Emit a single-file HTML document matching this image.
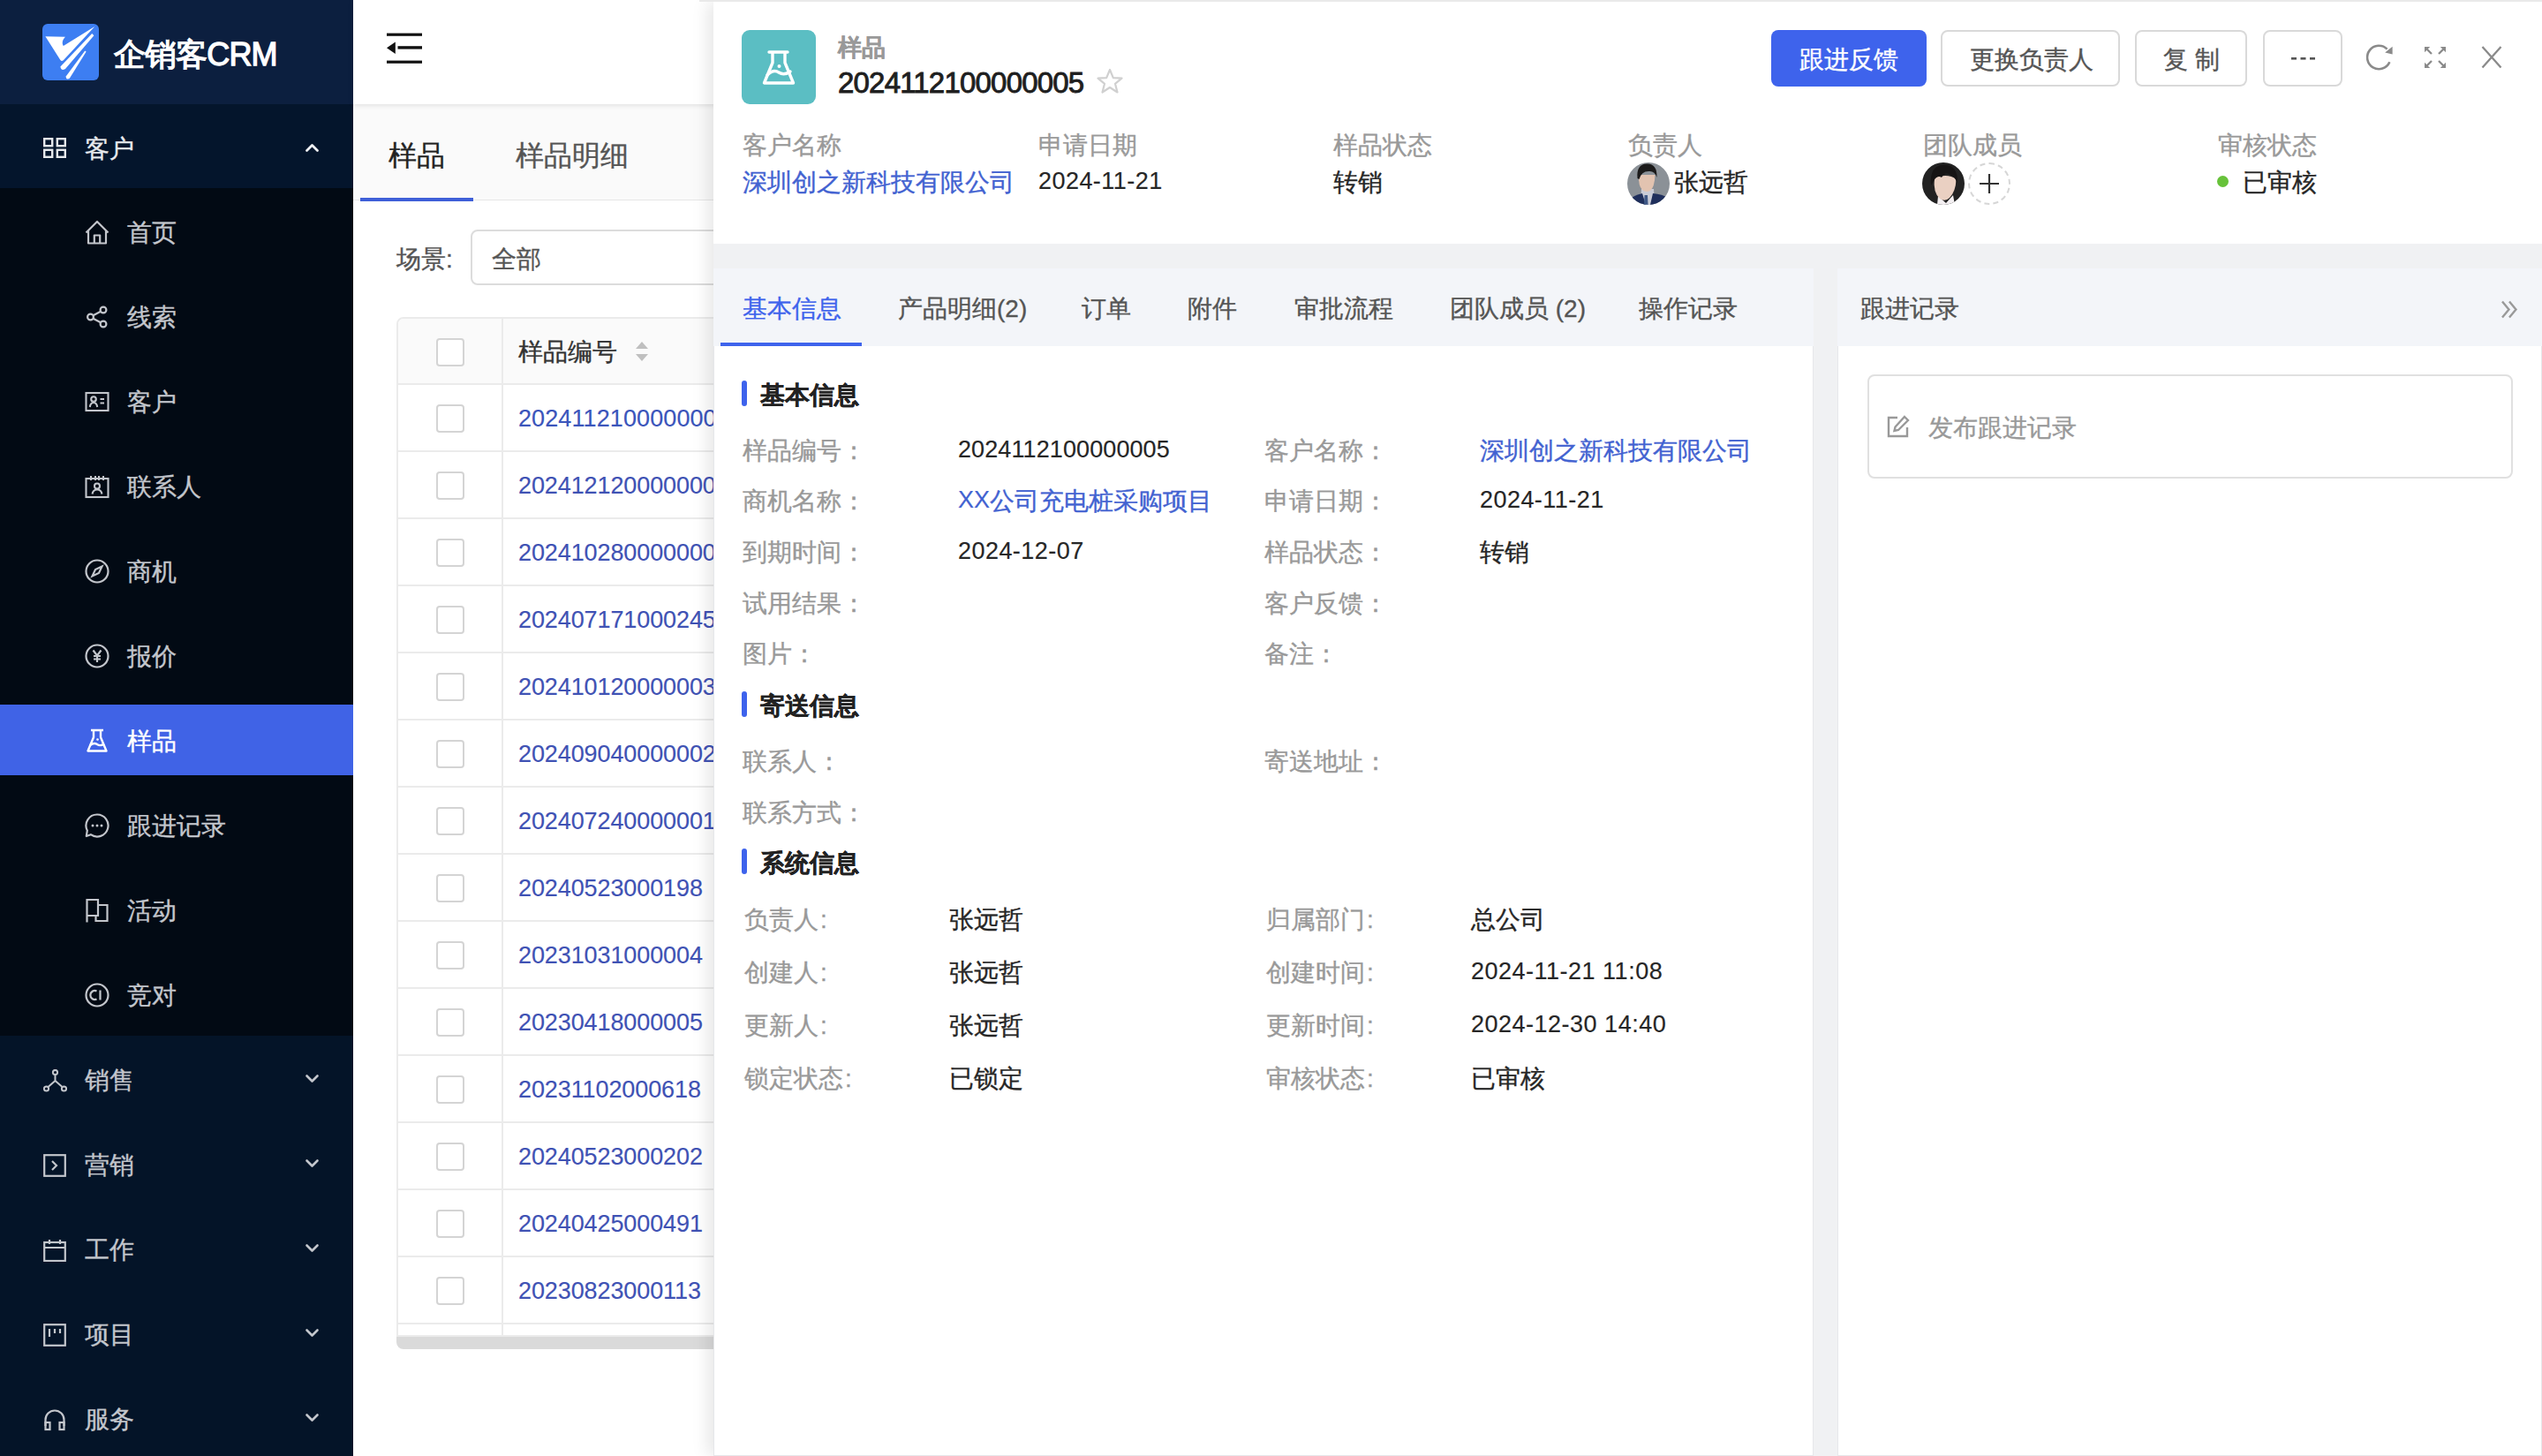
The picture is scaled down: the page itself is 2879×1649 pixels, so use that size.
<!DOCTYPE html>
<html><head><meta charset="utf-8">
<style>
*{box-sizing:border-box;margin:0;padding:0}
html,body{width:2879px;height:1649px;overflow:hidden;background:#fff}
body{font-family:"Liberation Sans",sans-serif;font-size:28px;line-height:32px;color:#333;position:relative;-webkit-text-stroke:0.35px}
.a{position:absolute;white-space:nowrap}
.n{font-size:27px;letter-spacing:-0.1px;position:relative;top:-2px;-webkit-text-stroke:0.15px}
svg{display:block}
/* sidebar */
#side{left:0;top:0;width:400px;height:1649px;background:#041428;overflow:hidden}
#logo{left:0;top:0;width:400px;height:118px;background:#0c1f3f}
#grp1{left:0;top:118px;width:400px;height:95px;background:#04152c}
#sub{left:0;top:213px;width:400px;height:960px;background:#020a14}
.mi{color:#c3c6cc}
.mt{left:144px}
.ic{left:98px}
#hl{left:0;top:798px;width:400px;height:80px;background:#4063e6}
/* main */
#hdr{left:400px;top:0;width:2479px;height:118px;background:#fff;box-shadow:0 1px 6px rgba(0,0,0,.12);z-index:2}
#tabs{left:400px;top:118px;width:2479px;height:109px;background:#fafafa;border-bottom:1px solid #e6e6e6}
/* drawer */
#drw{left:808px;top:2px;width:2071px;height:1647px;background:#f0f1f3;box-shadow:-6px 0 18px rgba(0,0,0,.10);z-index:5}
.lbl{color:#999}
.lnk{color:#4262d1}
.val{color:#262626}
.btn{border:2px solid #d9d9d9;border-radius:8px;background:#fff;height:63px;top:34px;color:#555}
</style></head><body>

<!-- ================= SIDEBAR ================= -->
<div id="side" class="a">
  <div id="logo" class="a"></div>
  <div class="a" style="left:48px;top:27px;width:64px;height:64px;border-radius:6px;background:#3d7ef2;overflow:hidden">
    <svg width="64" height="64" viewBox="0 0 64 64">
      <path d="M3.4 14.3 L26 14.8 C22.8 17.8 21.8 21.8 23.8 25 L59.3 2.9 L23.8 41.2 Q21.8 43 20.2 40.8 Z" fill="#fff"/>
      <path d="M56.2 11 L58.4 13.2 L26 51 Q21.2 54 20.4 48.6 Z" fill="#fff"/>
      <path d="M48.2 30.6 L49.6 31.6 L30.8 61.8 Q26.6 63.8 26.7 59.4 Z" fill="#fff"/>
    </svg>
  </div>
  <div class="a" style="left:129px;top:42px;font-size:36px;line-height:40px;color:#fff;-webkit-text-stroke:1.3px #fff;letter-spacing:-0.9px">企销客CRM</div>

  <div id="grp1" class="a"></div>
  <svg class="a" style="left:49px;top:156px" width="26" height="23" viewBox="0 0 26 23"><g fill="none" stroke="#e6e8ec" stroke-width="2.4"><rect x="1.2" y="1.2" width="9" height="8"/><rect x="15.8" y="1.2" width="9" height="8"/><rect x="1.2" y="13.8" width="9" height="8"/><rect x="15.8" y="13.8" width="9" height="8"/></g></svg>
  <div class="a" style="left:96px;top:153px;color:#e8eaee">客户</div>
  <svg class="a" style="left:345px;top:160px" width="17" height="13" viewBox="0 0 17 13"><path d="M2.5 10.5 L8.5 4.5 L14.5 10.5" fill="none" stroke="#f0f2f5" stroke-width="2.8" stroke-linecap="round" stroke-linejoin="round"/></svg>

  <div id="sub" class="a"></div>
  <div id="hl" class="a"></div>

  <!-- sub items: centers 262+96i -->
<svg class="a" style="left:96px;top:249px" width="28" height="28" viewBox="0 0 28 28"><g fill="none" stroke="#c3c6cc" stroke-width="2.2" stroke-linejoin="round"><path d="M1.5 14.5 L14 2 L26.5 14.5"/><path d="M4 12 V26.5 H24 V12"/><path d="M10.8 26.5 V17.5 H17.2 V26.5"/></g></svg>
<div class="a mi mt" style="top:248px">首页</div>
<svg class="a" style="left:96px;top:345px" width="28" height="28" viewBox="0 0 28 28"><g fill="none" stroke="#c3c6cc" stroke-width="2.2"><circle cx="21" cy="6" r="3.4"/><circle cx="6.5" cy="14" r="3.4"/><circle cx="21" cy="22" r="3.4"/><path d="M9.5 12.3 L18 7.7 M9.5 15.7 L18 20.3"/></g></svg>
<div class="a mi mt" style="top:344px">线索</div>
<svg class="a" style="left:96px;top:441px" width="28" height="28" viewBox="0 0 28 28"><g fill="none" stroke="#c3c6cc" stroke-width="2.1"><rect x="1.5" y="4" width="25" height="20"/><circle cx="10" cy="11" r="2.8"/><path d="M5.8 20 Q6.5 15 10 15 Q13.5 15 14.2 20"/><path d="M17.5 11 H22 M17.5 15.5 H22"/></g></svg>
<div class="a mi mt" style="top:440px">客户</div>
<svg class="a" style="left:96px;top:537px" width="28" height="28" viewBox="0 0 28 28"><g fill="none" stroke="#c3c6cc" stroke-width="2.1"><rect x="1.5" y="5" width="25" height="21"/><path d="M7 2 V7 M12 2 V7 M16 2 V7 M21 2 V7"/><circle cx="14" cy="13.5" r="3"/><path d="M8.5 22.5 Q9.5 17.5 14 17.5 Q18.5 17.5 19.5 22.5"/></g></svg>
<div class="a mi mt" style="top:536px">联系人</div>
<svg class="a" style="left:96px;top:633px" width="28" height="28" viewBox="0 0 28 28"><g fill="none" stroke="#c3c6cc" stroke-width="2.2"><circle cx="14" cy="14" r="12.5"/><path d="M19.5 8.5 L12 12 L8.5 19.5 L16 16 Z"/></g></svg>
<div class="a mi mt" style="top:632px">商机</div>
<svg class="a" style="left:96px;top:729px" width="28" height="28" viewBox="0 0 28 28"><g fill="none" stroke="#c3c6cc" stroke-width="2.2"><circle cx="14" cy="14" r="12.5"/><path d="M9.5 7.5 L14 13.5 L18.5 7.5 M14 13.5 V21 M10 14 H18 M10 17.5 H18"/></g></svg>
<div class="a mi mt" style="top:728px">报价</div>
<svg class="a" style="left:96px;top:825px" width="28" height="28" viewBox="0 0 28 28"><g fill="none" stroke="#fff" stroke-width="2.4" stroke-linejoin="round"><path d="M7 2 H21 M10 2 V10 L3.5 25.5 H24.5 L18 10 V2"/><path d="M6 19 Q10.5 15.5 14 18 Q17.5 20.5 22 17.5"/></g><circle cx="14.5" cy="12.5" r="1.3" fill="#fff"/></svg>
<div class="a mt" style="top:824px;color:#fff">样品</div>
<svg class="a" style="left:96px;top:921px" width="28" height="28" viewBox="0 0 28 28"><g fill="none" stroke="#c3c6cc" stroke-width="2.2" stroke-linejoin="round"><path d="M14 1.5 A12.5 12.5 0 1 1 6.8 24.2 L1.8 26 L2.8 19.6 A12.5 12.5 0 0 1 14 1.5 Z"/></g><circle cx="9" cy="14" r="1.5" fill="#c3c6cc"/><circle cx="14" cy="14" r="1.5" fill="#c3c6cc"/><circle cx="19" cy="14" r="1.5" fill="#c3c6cc"/></svg>
<div class="a mi mt" style="top:920px">跟进记录</div>
<svg class="a" style="left:96px;top:1017px" width="28" height="28" viewBox="0 0 28 28"><g fill="none" stroke="#c3c6cc" stroke-width="2.2"><path d="M2.5 27.5 V2 H15 V20 H2.5"/><path d="M15 8 H25.5 V26 H12.5 V20"/></g></svg>
<div class="a mi mt" style="top:1016px">活动</div>
<svg class="a" style="left:96px;top:1113px" width="28" height="28" viewBox="0 0 28 28"><g fill="none" stroke="#c3c6cc" stroke-width="2.2"><circle cx="14" cy="14" r="12.5"/><path d="M13.5 9.5 A5 5 0 1 0 13.5 18.5 M17.5 8.5 V19.5"/></g></svg>
<div class="a mi mt" style="top:1112px">竞对</div>

  <!-- groups -->
  <svg class="a" style="left:49px;top:1211px" width="27" height="26" viewBox="0 0 27 26"><g fill="none" stroke="#c3c6cc" stroke-width="2"><circle cx="13.5" cy="3.5" r="2.6"/><circle cx="3.5" cy="22" r="2.6"/><circle cx="23.5" cy="22" r="2.6"/><path d="M13.5 6 V13 L5.5 20 M13.5 13 L21.5 20"/></g></svg>
  <div class="a mi" style="left:96px;top:1208px">销售</div>
  <svg class="a" style="left:345px;top:1216px" width="17" height="12" viewBox="0 0 17 12"><path d="M2.5 2.5 L8.5 8.5 L14.5 2.5" fill="none" stroke="#c3c6cc" stroke-width="2.6" stroke-linecap="round" stroke-linejoin="round"/></svg>

  <svg class="a" style="left:49px;top:1307px" width="26" height="26" viewBox="0 0 26 26"><g fill="none" stroke="#c3c6cc" stroke-width="2.2"><rect x="1.2" y="1.2" width="23.6" height="23.6"/><path d="M10 8 L15 13 L10 18"/></g></svg>
  <div class="a mi" style="left:96px;top:1304px">营销</div>
  <svg class="a" style="left:345px;top:1312px" width="17" height="12" viewBox="0 0 17 12"><path d="M2.5 2.5 L8.5 8.5 L14.5 2.5" fill="none" stroke="#c3c6cc" stroke-width="2.6" stroke-linecap="round" stroke-linejoin="round"/></svg>

  <svg class="a" style="left:49px;top:1403px" width="26" height="26" viewBox="0 0 26 26"><g fill="none" stroke="#c3c6cc" stroke-width="2.2"><rect x="1.2" y="4" width="23.6" height="21"/><path d="M1.2 10 H24.8 M7 1 V6 M19 1 V6"/></g></svg>
  <div class="a mi" style="left:96px;top:1400px">工作</div>
  <svg class="a" style="left:345px;top:1408px" width="17" height="12" viewBox="0 0 17 12"><path d="M2.5 2.5 L8.5 8.5 L14.5 2.5" fill="none" stroke="#c3c6cc" stroke-width="2.6" stroke-linecap="round" stroke-linejoin="round"/></svg>

  <svg class="a" style="left:49px;top:1499px" width="26" height="26" viewBox="0 0 26 26"><g fill="none" stroke="#c3c6cc" stroke-width="2.2"><rect x="1.2" y="1.2" width="23.6" height="23.6"/><path d="M7 6 V15 M13 6 V11 M19 6 V11"/></g></svg>
  <div class="a mi" style="left:96px;top:1496px">项目</div>
  <svg class="a" style="left:345px;top:1504px" width="17" height="12" viewBox="0 0 17 12"><path d="M2.5 2.5 L8.5 8.5 L14.5 2.5" fill="none" stroke="#c3c6cc" stroke-width="2.6" stroke-linecap="round" stroke-linejoin="round"/></svg>

  <svg class="a" style="left:49px;top:1595px" width="26" height="26" viewBox="0 0 26 26"><g fill="none" stroke="#c3c6cc" stroke-width="2.2"><path d="M2.5 20 V13 A10.5 10.5 0 0 1 23.5 13 V20"/><rect x="2.5" y="16" width="5" height="8"/><rect x="18.5" y="16" width="5" height="8"/></g></svg>
  <div class="a mi" style="left:96px;top:1592px">服务</div>
  <svg class="a" style="left:345px;top:1600px" width="17" height="12" viewBox="0 0 17 12"><path d="M2.5 2.5 L8.5 8.5 L14.5 2.5" fill="none" stroke="#c3c6cc" stroke-width="2.6" stroke-linecap="round" stroke-linejoin="round"/></svg>
</div>

<!-- ================= MAIN LIST ================= -->
<div id="main">
<div id="hdr" class="a"></div>
<svg class="a" style="left:438px;top:37px;z-index:3" width="41" height="36" viewBox="0 0 41 36"><g fill="#111"><rect x="0" y="0.6" width="40" height="3.2"/><rect x="12.5" y="15.2" width="27.5" height="3.4"/><rect x="0" y="31.6" width="40" height="3.2"/><path d="M0 17.2 L9.8 10.4 V24 Z"/></g></svg>
<div id="tabs" class="a"></div>
<div class="a" style="left:440px;top:160px;font-size:32px;line-height:32px;color:#222">样品</div>
<div class="a" style="left:584px;top:160px;font-size:32px;line-height:32px;color:#555">样品明细</div>
<div class="a" style="left:408px;top:224px;width:128px;height:4px;background:#3e5fd8"></div>
<div class="a" style="left:449px;top:278px;color:#555">场景:</div>
<div class="a" style="left:533px;top:260px;width:400px;height:63px;border:2px solid #dcdcdc;border-radius:8px;background:#fff"></div>
<div class="a" style="left:557px;top:278px;color:#555">全部</div>
<div class="a" style="left:449px;top:359px;width:500px;height:1155px;border:2px solid #ebebeb;border-radius:8px 0 0 0;background:#fff;overflow:hidden">
  <div class="a" style="left:0;top:0;width:500px;height:73px;background:#fafafa"></div>
  <div class="a" style="left:117px;top:0;width:2px;height:1155px;background:#ebebeb"></div>

<div class="a" style="left:43px;top:22px;width:32px;height:32px;border:2px solid #d4d4d4;border-radius:4px;background:#fff"></div>
<div class="a" style="left:136px;top:22px;color:#333">样品编号</div>
<svg class="a" style="left:268px;top:22px" width="16" height="30" viewBox="0 0 16 30"><path d="M8 4 L15 12 H1 Z M8 26 L15 18 H1 Z" fill="#bfbfbf"/></svg>
<div class="a" style="left:0;top:73px;width:500px;height:2px;background:#ebebeb"></div>
<div class="a" style="left:43px;top:97px;width:32px;height:32px;border:2px solid #d4d4d4;border-radius:4px;background:#fff"></div>
<div class="a" style="left:136px;top:99px;color:#3b55bb"><span class="n" style="letter-spacing:0.1px">2024112100000005</span></div>
<div class="a" style="left:0;top:149px;width:500px;height:2px;background:#ebebeb"></div>
<div class="a" style="left:43px;top:173px;width:32px;height:32px;border:2px solid #d4d4d4;border-radius:4px;background:#fff"></div>
<div class="a" style="left:136px;top:175px;color:#3f52b4"><span class="n">2024121200000001</span></div>
<div class="a" style="left:0;top:225px;width:500px;height:2px;background:#ebebeb"></div>
<div class="a" style="left:43px;top:249px;width:32px;height:32px;border:2px solid #d4d4d4;border-radius:4px;background:#fff"></div>
<div class="a" style="left:136px;top:251px;color:#3f52b4"><span class="n">2024102800000001</span></div>
<div class="a" style="left:0;top:301px;width:500px;height:2px;background:#ebebeb"></div>
<div class="a" style="left:43px;top:325px;width:32px;height:32px;border:2px solid #d4d4d4;border-radius:4px;background:#fff"></div>
<div class="a" style="left:136px;top:327px;color:#3f52b4"><span class="n">2024071710002456</span></div>
<div class="a" style="left:0;top:377px;width:500px;height:2px;background:#ebebeb"></div>
<div class="a" style="left:43px;top:401px;width:32px;height:32px;border:2px solid #d4d4d4;border-radius:4px;background:#fff"></div>
<div class="a" style="left:136px;top:403px;color:#3f52b4"><span class="n">2024101200000035</span></div>
<div class="a" style="left:0;top:453px;width:500px;height:2px;background:#ebebeb"></div>
<div class="a" style="left:43px;top:477px;width:32px;height:32px;border:2px solid #d4d4d4;border-radius:4px;background:#fff"></div>
<div class="a" style="left:136px;top:479px;color:#3f52b4"><span class="n">2024090400000023</span></div>
<div class="a" style="left:0;top:529px;width:500px;height:2px;background:#ebebeb"></div>
<div class="a" style="left:43px;top:553px;width:32px;height:32px;border:2px solid #d4d4d4;border-radius:4px;background:#fff"></div>
<div class="a" style="left:136px;top:555px;color:#3f52b4"><span class="n">2024072400000012</span></div>
<div class="a" style="left:0;top:605px;width:500px;height:2px;background:#ebebeb"></div>
<div class="a" style="left:43px;top:629px;width:32px;height:32px;border:2px solid #d4d4d4;border-radius:4px;background:#fff"></div>
<div class="a" style="left:136px;top:631px;color:#3f52b4"><span class="n">20240523000198</span></div>
<div class="a" style="left:0;top:681px;width:500px;height:2px;background:#ebebeb"></div>
<div class="a" style="left:43px;top:705px;width:32px;height:32px;border:2px solid #d4d4d4;border-radius:4px;background:#fff"></div>
<div class="a" style="left:136px;top:707px;color:#3f52b4"><span class="n">20231031000004</span></div>
<div class="a" style="left:0;top:757px;width:500px;height:2px;background:#ebebeb"></div>
<div class="a" style="left:43px;top:781px;width:32px;height:32px;border:2px solid #d4d4d4;border-radius:4px;background:#fff"></div>
<div class="a" style="left:136px;top:783px;color:#3f52b4"><span class="n">20230418000005</span></div>
<div class="a" style="left:0;top:833px;width:500px;height:2px;background:#ebebeb"></div>
<div class="a" style="left:43px;top:857px;width:32px;height:32px;border:2px solid #d4d4d4;border-radius:4px;background:#fff"></div>
<div class="a" style="left:136px;top:859px;color:#3f52b4"><span class="n">20231102000618</span></div>
<div class="a" style="left:0;top:909px;width:500px;height:2px;background:#ebebeb"></div>
<div class="a" style="left:43px;top:933px;width:32px;height:32px;border:2px solid #d4d4d4;border-radius:4px;background:#fff"></div>
<div class="a" style="left:136px;top:935px;color:#3f52b4"><span class="n">20240523000202</span></div>
<div class="a" style="left:0;top:985px;width:500px;height:2px;background:#ebebeb"></div>
<div class="a" style="left:43px;top:1009px;width:32px;height:32px;border:2px solid #d4d4d4;border-radius:4px;background:#fff"></div>
<div class="a" style="left:136px;top:1011px;color:#3f52b4"><span class="n">20240425000491</span></div>
<div class="a" style="left:0;top:1061px;width:500px;height:2px;background:#ebebeb"></div>
<div class="a" style="left:43px;top:1085px;width:32px;height:32px;border:2px solid #d4d4d4;border-radius:4px;background:#fff"></div>
<div class="a" style="left:136px;top:1087px;color:#3f52b4"><span class="n">20230823000113</span></div>
<div class="a" style="left:0;top:1137px;width:500px;height:2px;background:#ebebeb"></div>
</div>
<div class="a" style="left:449px;top:1514px;width:400px;height:14px;background:#dadada;border-radius:0 0 0 8px"></div>
</div>

<!-- ================= DRAWER ================= -->
<div class="a" style="left:792px;top:0;width:2087px;height:2px;background:#e9e9e9;z-index:6"></div>
<div id="drw" class="a">
<div class="a" style="left:0px;top:0px;width:2071px;height:274px;background:#fff"></div>
<div class="a" style="left:32px;top:32px;width:84px;height:84px;border-radius:9px;background:#5bbec3">
<svg class="a" style="left:23px;top:23px" width="38" height="40" viewBox="0 0 38 40"><g fill="none" stroke="#fff" stroke-width="3.4" stroke-linejoin="round" stroke-linecap="round"><path d="M8 2 H29 M12 2 V14 L2.5 37 H35.5 L26 14 V2"/><path d="M6 28 Q13 21 19 25 Q25 29 32 24"/></g><circle cx="19.5" cy="18" r="2" fill="#fff"/></svg>
</div>
<div class="a " style="left:141px;top:38px;font-size:27px;line-height:28px;color:#999;font-weight:bold">样品</div>
<div class="a " style="left:141px;top:76px;font-size:33px;line-height:32px;color:#1f1f1f;-webkit-text-stroke:0.9px #1f1f1f;letter-spacing:-0.8px">2024112100000005</div>
<svg class="a" style="left:433px;top:75px" width="32" height="30" viewBox="0 0 32 30"><path d="M16 2 L19.8 11.2 L29.5 11.6 L22 17.8 L24.5 27.5 L16 22 L7.5 27.5 L10 17.8 L2.5 11.6 L12.2 11.2 Z" fill="none" stroke="#d0d0d0" stroke-width="2.2" stroke-linejoin="round"/></svg>
<div class="a" style="left:1198px;top:32px;width:176px;height:64px;background:#3e63ec;border-radius:8px"></div>
<div class="a " style="left:1230px;top:50px;color:#fff">跟进反馈</div>
<div class="a" style="left:1390px;top:32px;width:203px;height:64px;border:2px solid #d9d9d9;border-radius:8px;background:#fff"></div>
<div class="a " style="left:1423px;top:50px;color:#555">更换负责人</div>
<div class="a" style="left:1610px;top:32px;width:127px;height:64px;border:2px solid #d9d9d9;border-radius:8px;background:#fff"></div>
<div class="a " style="left:1642px;top:50px;color:#555">复&nbsp;制</div>
<div class="a" style="left:1755px;top:32px;width:90px;height:64px;border:2px solid #d9d9d9;border-radius:8px;background:#fff"></div>
<svg class="a" style="left:1787px;top:63px" width="28" height="4" viewBox="0 0 28 4"><g fill="#555"><rect x="0" y="0" width="6" height="2.6"/><rect x="10.5" y="0" width="6" height="2.6"/><rect x="21" y="0" width="6" height="2.6"/></g></svg>
<svg class="a" style="left:1870px;top:47px" width="34" height="32" viewBox="0 0 34 32"><path d="M28.4 21.2 A13.2 13.2 0 1 1 25.6 6.6" fill="none" stroke="#8a8a8a" stroke-width="2.6"/><path d="M31.6 3.8 L31.6 12.4 L23.2 10.6 Z" fill="#8a8a8a"/></svg>
<svg class="a" style="left:1937px;top:50px" width="26" height="26" viewBox="0 0 26 26"><g stroke="#8a8a8a" stroke-width="2.3" fill="none"><path d="M3 3 L9 9 M23 3 L17 9 M3 23 L9 17 M23 23 L17 17"/></g><g fill="#8a8a8a"><path d="M1 1 H7.2 L1 7.2 Z M25 1 H18.8 L25 7.2 Z M1 25 H7.2 L1 18.8 Z M25 25 H18.8 L25 18.8 Z"/></g></svg>
<svg class="a" style="left:2002px;top:50px" width="24" height="26" viewBox="0 0 24 26"><path d="M1.5 1 L22.5 24.5 M22.5 1 L1.5 24.5" stroke="#8a8a8a" stroke-width="2.3"/></svg>
<div class="a " style="left:33px;top:147px;color:#999">客户名称</div>
<div class="a " style="left:368px;top:147px;color:#999">申请日期</div>
<div class="a " style="left:702px;top:147px;color:#999">样品状态</div>
<div class="a " style="left:1036px;top:147px;color:#999">负责人</div>
<div class="a " style="left:1370px;top:147px;color:#999">团队成员</div>
<div class="a " style="left:1704px;top:147px;color:#999">审核状态</div>
<div class="a " style="left:33px;top:189px;color:#4262d1">深圳创之新科技有限公司</div>
<div class="a " style="left:368px;top:189px;color:#262626"><span class="n" style="letter-spacing:0.45px">2024-11-21</span></div>
<div class="a " style="left:702px;top:189px;color:#262626">转销</div>
<svg class="a" style="left:1035px;top:182px" width="48" height="48" viewBox="0 0 48 48"><defs><clipPath id="c1"><circle cx="24" cy="24" r="24"/></clipPath></defs><g clip-path="url(#c1)"><rect width="48" height="48" fill="#8b9197"/><path d="M16 30 H30 L31 48 H15 Z" fill="#c9cbd6"/><path d="M0 48 L2 42 Q8 37 17 35 L21 48 Z" fill="#1f2f5c"/><path d="M48 48 L46 40 Q40 36 29 35 L26 48 Z" fill="#1f2f5c"/><path d="M19.5 37 L23 37 L23.5 48 L19 48 Z" fill="#3e5785"/><path d="M13 14 Q12.5 27 17 31 Q21 34.5 26 32 Q31 28 31.5 14 Z" fill="#e2c3b0"/><path d="M11.5 18 Q10 2 22 1.5 Q34 1 33.5 17 Q31 9 24 10 Q16 10 13.5 19 Z" fill="#1b1a1a"/></g></svg>
<div class="a " style="left:1088px;top:189px;color:#262626">张远哲</div>
<svg class="a" style="left:1369px;top:182px" width="48" height="48" viewBox="0 0 48 48"><defs><clipPath id="c2"><circle cx="24" cy="24" r="24"/></clipPath></defs><g clip-path="url(#c2)"><rect width="48" height="48" fill="#222"/><path d="M18 38 L27 46 L35 37 L37 48 H17 Z" fill="#f4f0f2"/><path d="M14 17 Q12 34 20 41 Q26 45 31 40 Q38 33 38.5 19 Q30 12 14 17 Z" fill="#ead0c2"/><path d="M10 26 Q8 3 25 2.5 Q41 3 40 24 Q37 16 33 15 Q27 9 22 17 Q17 14 13 21 Z" fill="#161414"/></g></svg>
<div class="a" style="left:1421px;top:182px;width:48px;height:48px;border:2px dashed #d6d6d6;border-radius:50%"></div>
<svg class="a" style="left:1434px;top:195px" width="22" height="22" viewBox="0 0 22 22"><path d="M11 0 V22 M0 11 H22" stroke="#333" stroke-width="2.2"/></svg>
<div class="a" style="left:1703px;top:197px;width:13px;height:13px;border-radius:50%;background:#67c23a"></div>
<div class="a " style="left:1732px;top:189px;color:#262626">已审核</div>
<div class="a" style="left:0px;top:302px;width:1246px;height:1345px;background:#fff;border:1px solid #e6e7ea"></div>
<div class="a" style="left:0px;top:302px;width:1246px;height:88px;background:#f3f5f9"></div>
<div class="a" style="left:8px;top:386px;width:160px;height:4px;background:#3e63ec"></div>
<div class="a " style="left:33px;top:332px;color:#3e63ec">基本信息</div>
<div class="a " style="left:209px;top:332px;color:#555">产品明细<span style="letter-spacing:0">(2)</span></div>
<div class="a " style="left:417px;top:332px;color:#555">订单</div>
<div class="a " style="left:537px;top:332px;color:#555">附件</div>
<div class="a " style="left:658px;top:332px;color:#555">审批流程</div>
<div class="a " style="left:834px;top:332px;color:#555">团队成员 (2)</div>
<div class="a " style="left:1048px;top:332px;color:#555">操作记录</div>
<div class="a" style="left:1273px;top:302px;width:798px;height:1345px;background:#fff;border:1px solid #e6e7ea"></div>
<div class="a" style="left:1273px;top:302px;width:798px;height:88px;background:#f3f5f9"></div>
<div class="a " style="left:1299px;top:332px;color:#555">跟进记录</div>
<svg class="a" style="left:2024px;top:338px" width="20" height="21" viewBox="0 0 20 21"><path d="M2 1.5 L9.5 10.5 L2 19.5 M10 1.5 L17.5 10.5 L10 19.5" fill="none" stroke="#999" stroke-width="2.4"/></svg>
<div class="a" style="left:1307px;top:422px;width:731px;height:118px;border:2px solid #e0e0e0;border-radius:8px;background:#fff"></div>
<svg class="a" style="left:1329px;top:468px" width="26" height="26" viewBox="0 0 26 26"><g fill="none" stroke="#999" stroke-width="2.4"><path d="M12 3 H2 V24 H23 V14"/><path d="M20 2 L24 6 L13 17 L8.5 18 L9.5 13.5 Z"/></g></svg>
<div class="a " style="left:1376px;top:467px;color:#999">发布跟进记录</div>
<div class="a" style="left:32px;top:429px;width:6px;height:29px;background:#3e63ec;border-radius:3px"></div>
<div class="a " style="left:53px;top:430px;color:#222;font-weight:bold">基本信息</div>
<div class="a " style="left:33px;top:493px;color:#999">样品编号：</div>
<div class="a " style="left:277px;top:493px;color:#262626"><span class="n" style="letter-spacing:0.1px">2024112100000005</span></div>
<div class="a " style="left:624px;top:493px;color:#999">客户名称：</div>
<div class="a " style="left:868px;top:493px;color:#262626"><span style="color:#4262d1">深圳创之新科技有限公司</span></div>
<div class="a " style="left:33px;top:550px;color:#999">商机名称：</div>
<div class="a " style="left:277px;top:550px;color:#262626"><span style="color:#4262d1"><span class="n">XX</span>公司充电桩采购项目</span></div>
<div class="a " style="left:624px;top:550px;color:#999">申请日期：</div>
<div class="a " style="left:868px;top:550px;color:#262626"><span class="n" style="letter-spacing:0.45px">2024-11-21</span></div>
<div class="a " style="left:33px;top:608px;color:#999">到期时间：</div>
<div class="a " style="left:277px;top:608px;color:#262626"><span class="n" style="letter-spacing:0.45px">2024-12-07</span></div>
<div class="a " style="left:624px;top:608px;color:#999">样品状态：</div>
<div class="a " style="left:868px;top:608px;color:#262626">转销</div>
<div class="a " style="left:33px;top:666px;color:#999">试用结果：</div>
<div class="a " style="left:624px;top:666px;color:#999">客户反馈：</div>
<div class="a " style="left:33px;top:723px;color:#999">图片：</div>
<div class="a " style="left:624px;top:723px;color:#999">备注：</div>
<div class="a" style="left:32px;top:781px;width:6px;height:29px;background:#3e63ec;border-radius:3px"></div>
<div class="a " style="left:53px;top:782px;color:#222;font-weight:bold">寄送信息</div>
<div class="a " style="left:33px;top:845px;color:#999">联系人：</div>
<div class="a " style="left:624px;top:845px;color:#999">寄送地址：</div>
<div class="a " style="left:33px;top:903px;color:#999">联系方式：</div>
<div class="a" style="left:32px;top:959px;width:6px;height:29px;background:#3e63ec;border-radius:3px"></div>
<div class="a " style="left:53px;top:960px;color:#222;font-weight:bold">系统信息</div>
<div class="a " style="left:35px;top:1024px;color:#999">负责人<span style="margin-left:2px">:</span></div>
<div class="a " style="left:267px;top:1024px;color:#262626">张远哲</div>
<div class="a " style="left:626px;top:1024px;color:#999">归属部门<span style="margin-left:2px">:</span></div>
<div class="a " style="left:858px;top:1024px;color:#262626">总公司</div>
<div class="a " style="left:35px;top:1084px;color:#999">创建人<span style="margin-left:2px">:</span></div>
<div class="a " style="left:267px;top:1084px;color:#262626">张远哲</div>
<div class="a " style="left:626px;top:1084px;color:#999">创建时间<span style="margin-left:2px">:</span></div>
<div class="a " style="left:858px;top:1084px;color:#262626"><span class="n" style="letter-spacing:0.5px">2024-11-21 11:08</span></div>
<div class="a " style="left:35px;top:1144px;color:#999">更新人<span style="margin-left:2px">:</span></div>
<div class="a " style="left:267px;top:1144px;color:#262626">张远哲</div>
<div class="a " style="left:626px;top:1144px;color:#999">更新时间<span style="margin-left:2px">:</span></div>
<div class="a " style="left:858px;top:1144px;color:#262626"><span class="n" style="letter-spacing:0.5px">2024-12-30 14:40</span></div>
<div class="a " style="left:35px;top:1204px;color:#999">锁定状态<span style="margin-left:2px">:</span></div>
<div class="a " style="left:267px;top:1204px;color:#262626">已锁定</div>
<div class="a " style="left:626px;top:1204px;color:#999">审核状态<span style="margin-left:2px">:</span></div>
<div class="a " style="left:858px;top:1204px;color:#262626">已审核</div>
</div>

</body></html>
